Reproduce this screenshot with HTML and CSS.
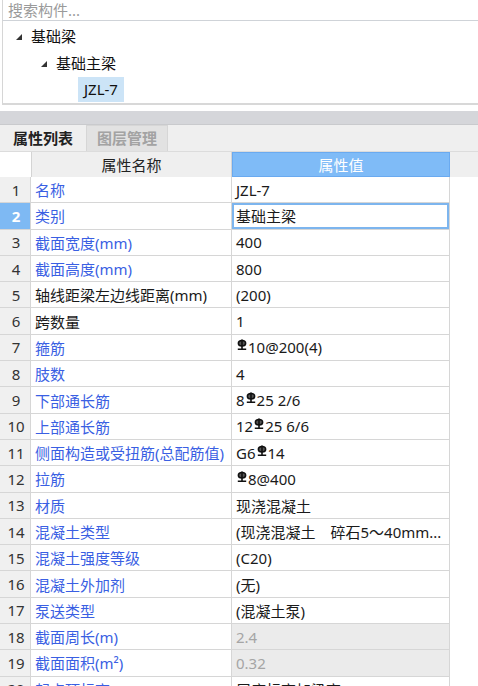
FILE: index.html
```html
<!DOCTYPE html>
<html>
<head>
<meta charset="utf-8">
<link rel="stylesheet" href="styles.css">
</head>
<body>
<div class="search">搜索构件...</div>
<div class="tree">
  <div class="node l1"><span class="tri"></span>基础梁</div>
  <div class="node l2"><span class="tri"></span>基础主梁</div>
  <div class="node l3"><span class="sel">JZL-7</span></div>
</div>
<div class="band"></div>
<div class="tabs">
  <div class="tab active">属性列表</div>
  <div class="tab">图层管理</div>
</div>
<div class="grid">
  <div class="h-num"></div><div class="h-name">属性名称</div><div class="h-val">属性值</div><div class="h-rest"></div>

  <div class="num">1</div><div class="name">名称</div><div class="val">JZL-7</div><div class="rest"></div>
  <div class="num cur">2</div><div class="name">类别</div><div class="val focus">基础主梁</div><div class="rest"></div>
  <div class="num">3</div><div class="name">截面宽度(mm)</div><div class="val">400</div><div class="rest"></div>
  <div class="num">4</div><div class="name">截面高度(mm)</div><div class="val">800</div><div class="rest"></div>
  <div class="num">5</div><div class="name blk">轴线距梁左边线距离(mm)</div><div class="val">(200)</div><div class="rest"></div>
  <div class="num">6</div><div class="name blk">跨数量</div><div class="val">1</div><div class="rest"></div>
  <div class="num">7</div><div class="name">箍筋</div><div class="val"><svg class="rb" viewBox="0 0 10 11"><ellipse cx="5" cy="4.2" rx="3.6" ry="2.7"/><path d="M5 0.4V10.2M0.8 10.2H9.2"/></svg>10@200(4)</div><div class="rest"></div>
  <div class="num">8</div><div class="name">肢数</div><div class="val">4</div><div class="rest"></div>
  <div class="num">9</div><div class="name">下部通长筋</div><div class="val">8<svg class="rb" viewBox="0 0 10 11"><ellipse cx="5" cy="4.2" rx="3.6" ry="2.7"/><path d="M5 0.4V10.2M0.8 10.2H9.2"/></svg>25 2/6</div><div class="rest"></div>
  <div class="num">10</div><div class="name">上部通长筋</div><div class="val">12<svg class="rb" viewBox="0 0 10 11"><ellipse cx="5" cy="4.2" rx="3.6" ry="2.7"/><path d="M5 0.4V10.2M0.8 10.2H9.2"/></svg>25 6/6</div><div class="rest"></div>
  <div class="num">11</div><div class="name">侧面构造或受扭筋(总配筋值)</div><div class="val">G6<svg class="rb" viewBox="0 0 10 11"><ellipse cx="5" cy="4.2" rx="3.6" ry="2.7"/><path d="M5 0.4V10.2M0.8 10.2H9.2"/></svg>14</div><div class="rest"></div>
  <div class="num">12</div><div class="name">拉筋</div><div class="val"><svg class="rb" viewBox="0 0 10 11"><ellipse cx="5" cy="4.2" rx="3.6" ry="2.7"/><path d="M5 0.4V10.2M0.8 10.2H9.2"/></svg>8@400</div><div class="rest"></div>
  <div class="num">13</div><div class="name">材质</div><div class="val">现浇混凝土</div><div class="rest"></div>
  <div class="num">14</div><div class="name">混凝土类型</div><div class="val">(现浇混凝土　碎石5～40mm...</div><div class="rest"></div>
  <div class="num">15</div><div class="name">混凝土强度等级</div><div class="val">(C20)</div><div class="rest"></div>
  <div class="num">16</div><div class="name">混凝土外加剂</div><div class="val">(无)</div><div class="rest"></div>
  <div class="num">17</div><div class="name">泵送类型</div><div class="val">(混凝土泵)</div><div class="rest"></div>
  <div class="num">18</div><div class="name">截面周长(m)</div><div class="val ro">2.4</div><div class="rest"></div>
  <div class="num">19</div><div class="name">截面面积(m²)</div><div class="val ro">0.32</div><div class="rest"></div>
  <div class="num">20</div><div class="name">起点顶标高(m)</div><div class="val">层底标高加梁高(0.80)</div><div class="rest"></div>
</div>
</body>
</html>
```

FILE: styles.css
```css
* { box-sizing: border-box; }
html, body {
  margin: 0;
  padding: 0;
  background: #ffffff;
  overflow: hidden;
}
body {
  width: 478px;
  height: 686px;
  font-family: "Noto Sans", "Noto Sans CJK SC", sans-serif;
  font-size: 15px;
  color: #1a1a1a;
}
.search {
  height: 21px;
  line-height: 20px;
  padding-left: 5px;
  margin-left: 2px;
  color: #9a9a9a;
  border-left: 1px solid #d6d6d6;
  border-bottom: 1px solid #cfd3d8;
}
.tree {
  margin-left: 2px;
  height: 84px;
  border-left: 1px solid #d6d6d6;
  border-bottom: 2px solid #d8d8d8;
  padding-top: 1px;
}
.node {
  height: 27px;
  display: flex;
  align-items: center;
  color: #111;
}
.l1 { padding-left: 13px; }
.l2 { padding-left: 38px; }
.l3 { padding-left: 75px; }
.tri {
  width: 0;
  height: 0;
  border-left: 6px solid transparent;
  border-bottom: 6px solid #333;
  margin-right: 9px;
  margin-top: 2px;
}
.sel {
  background: #cce4f7;
  padding: 0 6px;
  height: 25px;
  line-height: 25px;
}
.band {
  margin-top: 6px;
  height: 14px;
  background: #d5d6da;
  border-bottom: 1px solid #c9cacd;
}
.tabs {
  height: 27px;
  background: #efefef;
  display: flex;
  align-items: flex-end;
  padding-left: 4px;
  gap: 4px;
  border-bottom: 1px solid #dcdcdc;
}
.tab {
  height: 26px;
  line-height: 25px;
  padding: 0 10px;
  color: #a3a3a3;
  background: #e2e2e2;
  border: 1px solid #d6d6d6;
  border-bottom: none;
  font-weight: 600;
}
.tab.active {
  background: #efefef;
  color: #222;
  border-color: transparent;
  font-weight: 700;
  padding: 0 8px;
}
.grid {
  display: grid;
  grid-template-columns: 31px 201px 218px 1fr;
  grid-template-rows: 25px;
  grid-auto-rows: 26.3px;
}
.grid > div {
  white-space: nowrap;
  overflow: hidden;
  display: flex;
  align-items: center;
}
.h-num { background: #ffffff; }
.h-name {
  background: #efefef;
  justify-content: center;
  border-right: 1px solid #d4d4d4;
  border-left: 1px solid #d4d4d4;
  color: #222;
}
.h-val {
  background: #7fbbf7;
  color: #ffffff;
  justify-content: center;
  border: 1px solid #6aaaf0;
}
.h-rest { background: #efefef; }
.num {
  background: #f0f0f0;
  justify-content: center;
  color: #333;
  border-bottom: 1px solid #d6d6d6;
  border-right: 1px solid #d6d6d6;
  padding-left: 2px;
}
.num.cur {
  background: #7eb9f3;
  color: #fff;
  font-weight: 700;
}
.name {
  color: #3a5fe3;
  padding-left: 4px;
  border-bottom: 1px solid #d6d6d6;
  border-right: 1px solid #d6d6d6;
}
.name.blk { color: #1a1a1a; }
.val {
  padding-left: 4px;
  border-bottom: 1px solid #d6d6d6;
  border-right: 1px solid #d6d6d6;
  color: #1a1a1a;
}
.val.focus {
  box-shadow: inset 0 0 0 2px #7db5ee;
}
.val.ro {
  background: #ebebeb;
  color: #a5a5a5;
}
.rest { background: #ffffff; }
.rb {
  width: 10px;
  height: 11px;
  margin: 0 1px 5px 1px;
  fill: #555;
  stroke: #111;
  stroke-width: 1.6;
  flex: none;
}
```
